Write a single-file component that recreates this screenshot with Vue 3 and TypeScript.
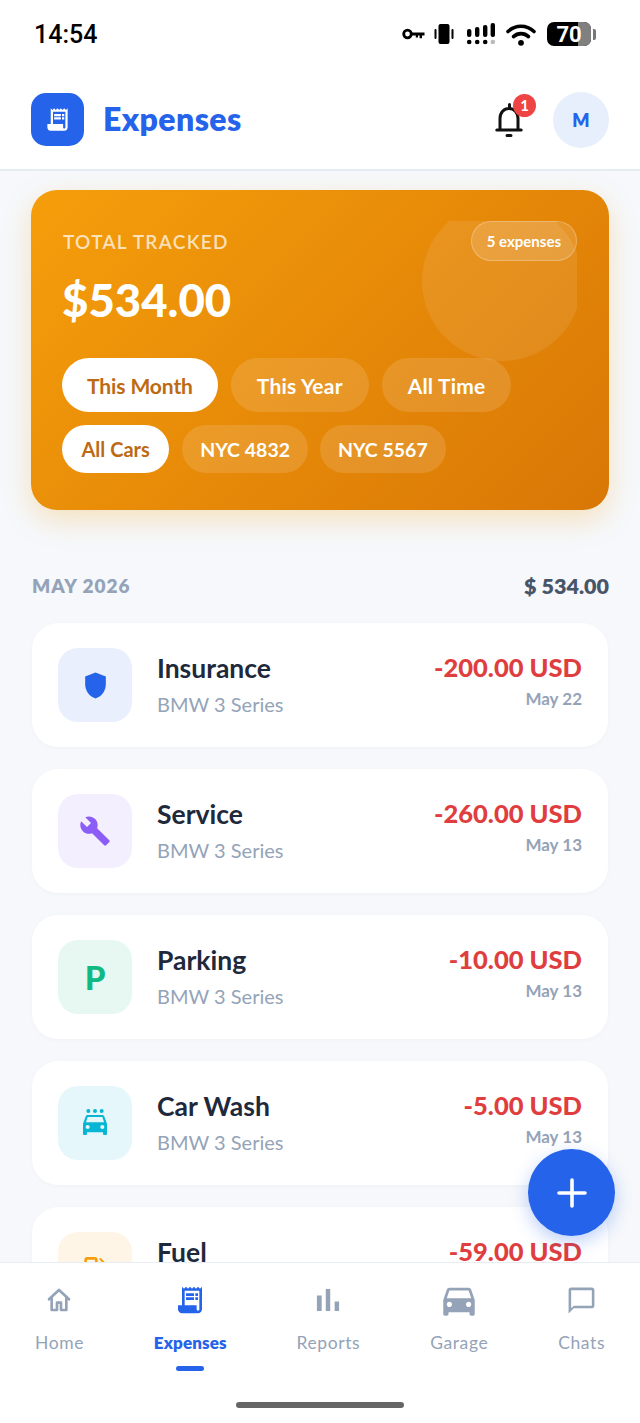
<script setup lang="ts">
interface Expense {
  name: string;
  car: string;
  amount: string;
  date: string;
  tint: string;
  color: string;
  path?: string;
  size?: number;
  letter?: string;
}

interface NavItem {
  label: string;
  path: string;
  size: number;
  active?: boolean;
  outline?: boolean;
}

const receiptPath =
  "M19.5 3.5 18 2l-1.5 1.5L15 2l-1.5 1.5L12 2l-1.5 1.5L9 2 7.5 3.5 6 2v14H3v3c0 1.66 1.34 3 3 3h12c1.66 0 3-1.34 3-3V2l-1.5 1.5zM19 19c0 .55-.45 1-1 1s-1-.45-1-1v-3H8V5h11v14zM9 7h6v2H9zM16 7h2v2h-2zM9 10h6v2H9zM16 10h2v2h-2z";
const carPath =
  "M18.92 6.01C18.72 5.42 18.16 5 17.5 5h-11c-.66 0-1.21.42-1.42 1.01L3 12v8c0 .55.45 1 1 1h1c.55 0 1-.45 1-1v-1h12v1c0 .55.45 1 1 1h1c.55 0 1-.45 1-1v-8l-2.08-5.99zM6.5 16c-.83 0-1.5-.67-1.5-1.5S5.67 13 6.5 13s1.5.67 1.5 1.5S7.33 16 6.5 16zm11 0c-.83 0-1.5-.67-1.5-1.5s.67-1.5 1.5-1.5 1.5.67 1.5 1.5-.67 1.5-1.5 1.5zM5 11l1.5-4.5h11L19 11H5z";

const periods = ["This Month", "This Year", "All Time"];
const cars = ["All Cars", "NYC 4832", "NYC 5567"];

const expenses: Expense[] = [
  {
    name: "Insurance",
    car: "BMW 3 Series",
    amount: "-200.00 USD",
    date: "May 22",
    tint: "#e9effd",
    color: "#2563eb",
    size: 31,
    path: "M12 2 4 5v6.09c0 5.05 3.41 9.76 8 10.91 4.59-1.15 8-5.86 8-10.91V5l-8-3z",
  },
  {
    name: "Service",
    car: "BMW 3 Series",
    amount: "-260.00 USD",
    date: "May 13",
    tint: "#f3effe",
    color: "#8b5cf6",
    size: 32,
    path: "M22.7 19l-9.1-9.1c.9-2.3.4-5-1.5-6.9-2-2-5-2.4-7.4-1.3L9 6 6 9 1.6 4.7C.4 7.1.9 10.1 2.9 12.1c1.9 1.9 4.6 2.4 6.9 1.5l9.1 9.1c.4.4 1 .4 1.4 0l2.3-2.3c.5-.4.5-1.1.1-1.4z",
  },
  {
    name: "Parking",
    car: "BMW 3 Series",
    amount: "-10.00 USD",
    date: "May 13",
    tint: "#e7f8f2",
    color: "#10b981",
    letter: "P",
  },
  {
    name: "Car Wash",
    car: "BMW 3 Series",
    amount: "-5.00 USD",
    date: "May 13",
    tint: "#e6f7fc",
    color: "#06b6d4",
    size: 32,
    path:
      "M7 1.5a1.5 1.5 0 1 0 0 3 1.5 1.5 0 1 0 0-3zM12 1.5a1.5 1.5 0 1 0 0 3 1.5 1.500 0 1 0 0-3zM17 1.500a1.5 1.5 0 1 0 0 3 1.5 1.5 0 1 0 0-3zM18.920 7.010C18.720 6.420 18.160 6 17.500 6h-11c-.66 0-1.210.42-1.420 1.010L3 12.500V20c0 .55.45 1 1 1h1c.55 0 1-.45 1-1v-1h12v1c0 .55.45 1 1 1h1c.55 0 1-.45 1-1v-7.500l-2.080-5.490zM6.500 16.500c-.83 0-1.500-.67-1.500-1.500s.67-1.500 1.500-1.500 1.500.67 1.500 1.500-.67 1.500-1.500 1.500zm11 0c-.83 0-1.500-.67-1.500-1.500s.67-1.500 1.500-1.500 1.500.67 1.500 1.500-.67 1.500-1.500 1.500zM5.200 11.500l1.300-4h11l1.300 4H5.200z",
  },
  {
    name: "Fuel",
    car: "BMW 3 Series",
    amount: "-59.00 USD",
    date: "May 13",
    tint: "#fef5e6",
    color: "#f59e0b",
    size: 32,
    path:
      "M19.77 7.23l.01-.01-3.72-3.72L15 4.56l2.11 2.11c-.94.36-1.61 1.26-1.61 2.33 0 1.38 1.12 2.5 2.5 2.5.36 0 .69-.08 1-.21v7.21c0 .55-.45 1-1 1s-1-.45-1-1V14c0-1.1-.9-2-2-2h-1V5c0-1.1-.9-2-2-2H6c-1.1 0-2 .9-2 2v16h10v-7.5h1.5v5c0 1.38 1.12 2.5 2.5 2.5s2.5-1.12 2.5-2.5V9c0-.69-.28-1.32-.73-1.77zM12 10H6V5h6v5zm6 0c-.55 0-1-.45-1-1s.45-1 1-1 1 .45 1 1-.45 1-1 1z",
  },
];

const navItems: NavItem[] = [
  {
    label: "Home",
    size: 32,
    outline: true,
    path: "M4.5 11.5 12 4.5l7.5 7M6.5 10v9.5h4v-5.5h3v5.5h4V10",
  },
  { label: "Expenses", size: 32, active: true, path: receiptPath },
  {
    label: "Reports",
    size: 38,
    path: "M5 9.2h3V19H5zM10.6 5h2.8v14h-2.8zm5.6 8H19v6h-2.8z",
  },
  { label: "Garage", size: 42, path: carPath },
  {
    label: "Chats",
    size: 31,
    path: "M20 2H4c-1.1 0-2 .9-2 2v18l4-4h14c1.1 0 2-.9 2-2V4c0-1.1-.9-2-2-2zm0 14H6l-2 2V4h16v12z",
  },
];
</script>

<template>
  <div class="screen">
    <div class="status-bar">
      <span class="clock">14:54</span>
      <div class="status-icons">
        <svg class="st-key" width="23" height="12" viewBox="0 0 23 12">
          <circle cx="5.5" cy="6" r="3.8" fill="none" stroke="#000" stroke-width="2.8" />
          <path d="M9 4.4h13.500v3h-2.500v2.800h-2.400V7.400h-1.600v2.200h-2.200V7.400H9z" fill="#000" />
        </svg>
        <svg class="st-vibrate" width="20" height="20" viewBox="0 0 20 20">
          <rect x="4.5" y="0" width="11" height="20" rx="2" fill="#000" />
          <rect x="0.5" y="5" width="2" height="10" rx="1" fill="#000" />
          <rect x="17.5" y="5" width="2" height="10" rx="1" fill="#000" />
        </svg>
        <svg class="st-signal" width="29" height="22" viewBox="0 0 29 22">
          <rect x="1" y="6" width="4.4" height="8" rx="2" fill="#000" />
          <rect x="9" y="4" width="4.4" height="10" rx="2" fill="#000" />
          <rect x="17" y="2" width="4.4" height="12" rx="2" fill="#000" />
          <rect x="24.6" y="0" width="4.4" height="14" rx="2" fill="#000" />
          <circle cx="3.2" cy="19" r="2.3" fill="#000" />
          <circle cx="11.2" cy="19" r="2.3" fill="#000" />
          <circle cx="19.2" cy="19" r="2.3" fill="#000" />
          <circle cx="26.8" cy="19" r="2.3" fill="#bbb" />
        </svg>
        <svg class="st-wifi" width="30" height="23" viewBox="0 0 30 23">
          <path d="M2 8.5c7.500-7 18.500-7 26 0" fill="none" stroke="#000" stroke-width="3.6" stroke-linecap="round" />
          <path d="M7.500 13.600c4.300-4 10.700-4 15 0" fill="none" stroke="#000" stroke-width="3.600" stroke-linecap="round" />
          <circle cx="15" cy="19.800" r="2.900" fill="#000" />
        </svg>
        <div class="battery">
          <span class="battery-fill" />
          <span class="battery-level">70</span>
        </div>
        <span class="battery-nub" />
      </div>
    </div>

    <header class="app-header">
      <div class="logo">
        <svg width="27" height="27" viewBox="0 0 24 24" fill="#fff"><path :d="receiptPath" /></svg>
      </div>
      <h1 class="app-title">Expenses</h1>
      <div class="bell">
        <svg width="28" height="36" viewBox="0 0 28 36" fill="none" stroke="#111" stroke-width="3" stroke-linecap="round">
          <path d="M14.500 2.500v4M5 27V16.500C5 10.500 9 6.500 14 6.500s9 4 9 10V27M1.800 28h24.400M12 33.500h4" />
        </svg>
        <span class="bell-badge">1</span>
      </div>
      <div class="avatar">M</div>
    </header>

    <main class="content">
      <section class="summary">
        <div class="summary-deco"><span /></div>
        <div class="summary-top">
          <span class="summary-label">TOTAL TRACKED</span>
          <span class="summary-count">5 expenses</span>
        </div>
        <div class="summary-total">$534.00</div>
        <div class="pill-row">
          <span
            v-for="(p, i) in periods"
            :key="p"
            class="pill pill-lg"
            :class="{ 'pill-on': i === 0 }"
          >{{ p }}</span>
        </div>
        <div class="pill-row pill-row-cars">
          <span
            v-for="(c, i) in cars"
            :key="c"
            class="pill pill-sm"
            :class="{ 'pill-on': i === 0 }"
          >{{ c }}</span>
        </div>
      </section>

      <div class="month-head">
        <span class="month-name">MAY 2026</span>
        <span class="month-sum">$ 534.00</span>
      </div>

      <div class="expense-list">
        <article v-for="e in expenses" :key="e.name" class="expense">
          <div class="expense-icon" :style="{ background: e.tint, color: e.color }">
            <span v-if="e.letter" class="expense-letter">{{ e.letter }}</span>
            <svg v-else :width="e.size" :height="e.size" viewBox="0 0 24 24" fill="currentColor">
              <path :d="e.path" />
            </svg>
          </div>
          <div class="expense-info">
            <div class="expense-name">{{ e.name }}</div>
            <div class="expense-car">{{ e.car }}</div>
          </div>
          <div class="expense-side">
            <div class="expense-amount">{{ e.amount }}</div>
            <div class="expense-date">{{ e.date }}</div>
          </div>
        </article>
      </div>
    </main>

    <button class="fab" aria-label="Add expense">
      <svg width="30" height="30" viewBox="0 0 30 30">
        <path d="M15 2v26M2 15h26" stroke="#fff" stroke-width="3.600" stroke-linecap="round" />
      </svg>
    </button>

    <nav class="tabbar">
      <div v-for="n in navItems" :key="n.label" class="tab" :class="{ 'tab-on': n.active }">
        <div class="tab-icon">
          <svg
            v-if="n.outline"
            :width="n.size"
            :height="n.size"
            viewBox="0 0 24 24"
            fill="none"
            stroke="currentColor"
            stroke-width="2"
            stroke-linejoin="round"
            stroke-linecap="round"
          >
            <path :d="n.path" />
          </svg>
          <svg v-else :width="n.size" :height="n.size" viewBox="0 0 24 24" fill="currentColor">
            <path :d="n.path" />
          </svg>
        </div>
        <span class="tab-label">{{ n.label }}</span>
        <span v-if="n.active" class="tab-marker" />
      </div>
    </nav>
    <div class="home-area"><span class="home-bar" /></div>
  </div>
</template>

<style>
html,
body {
  margin: 0;
  background: #fff;
}
</style>

<style scoped>
.screen {
  position: relative;
  display: flex;
  flex-direction: column;
  width: 640px;
  height: 1423px;
  overflow: hidden;
  background: #fff;
  font-family: Lato, "Noto Sans", sans-serif;
}

.status-bar {
  display: flex;
  align-items: center;
  justify-content: space-between;
  flex: none;
  height: 70px;
  padding: 0 44px 2px 34px;
  box-sizing: border-box;
}

.clock {
  font-family: Roboto, sans-serif;
  font-size: 25px;
  font-weight: 500;
  color: #000;
}

.status-icons {
  display: flex;
  align-items: center;
}

.st-key {
  margin-right: 9px;
}

.st-vibrate {
  margin-right: 12px;
}

.st-signal {
  margin-right: 11px;
}

.st-wifi {
  margin-right: 11px;
}

.battery {
  position: relative;
  width: 44px;
  height: 24px;
  overflow: hidden;
  border-radius: 7px;
  background: #000;
}

.battery-fill {
  position: absolute;
  top: 0;
  right: 0;
  bottom: 0;
  width: 13px;
  background: #808080;
}

.battery-level {
  position: absolute;
  inset: 0;
  text-align: center;
  font-family: Roboto, sans-serif;
  font-size: 22px;
  line-height: 25px;
  font-weight: 700;
  color: #fff;
}

.battery-nub {
  width: 3px;
  height: 11px;
  margin-left: 2px;
  border-radius: 0 2px 2px 0;
  background: #777;
}

.app-header {
  display: flex;
  align-items: center;
  flex: none;
  height: 101px;
  padding: 0 31px;
  box-sizing: border-box;
  border-bottom: 2px solid #e4ebf3;
}

.logo {
  display: flex;
  align-items: center;
  justify-content: center;
  width: 53px;
  height: 53px;
  border-radius: 15px;
  background: #2563eb;
}

.app-title {
  margin: 0 0 2px 19px;
  font-size: 32px;
  font-weight: 800;
  letter-spacing: 0.4px;
  color: #2563eb;
}

.bell {
  position: relative;
  display: flex;
  margin-left: auto;
  margin-right: 30px;
}

.bell-badge {
  position: absolute;
  top: -8px;
  right: -13px;
  width: 23px;
  height: 23px;
  border-radius: 50%;
  background: #ef4444;
  color: #fff;
  font-size: 15px;
  font-weight: 700;
  line-height: 23px;
  text-align: center;
}

.avatar {
  display: flex;
  align-items: center;
  justify-content: center;
  width: 56px;
  height: 56px;
  border-radius: 50%;
  background: #e8effc;
  color: #2563eb;
  font-size: 18px;
  font-weight: 800;
}

.content {
  flex: 1;
  min-height: 0;
  overflow: hidden;
  padding: 19px 31px 0 31px;
  background: #f6f8fb;
}

.summary {
  position: relative;
  height: 320px;
  padding: 31px 32px 0 31px;
  box-sizing: border-box;
  border-radius: 26px;
  background: linear-gradient(135deg, #f59e0b, #d97706);
  box-shadow: 0 10px 28px rgba(245, 158, 11, 0.25);
}

.summary-deco {
  position: absolute;
  top: 31px;
  right: 32px;
  width: 155px;
  height: 140px;
  overflow: hidden;
}

.summary-deco span {
  display: block;
  width: 160px;
  height: 160px;
  margin-top: -20px;
  border-radius: 50%;
  background: rgba(255, 255, 255, 0.09);
}

.summary-top {
  position: relative;
  display: flex;
  align-items: center;
  justify-content: space-between;
}

.summary-label {
  margin-left: 1px;
  font-size: 19px;
  font-weight: 600;
  letter-spacing: 1.3px;
  color: rgba(255, 255, 255, 0.72);
}

.summary-count {
  height: 40px;
  padding: 0 15px;
  box-sizing: border-box;
  border: 1px solid rgba(255, 255, 255, 0.25);
  border-radius: 20px;
  background: rgba(255, 255, 255, 0.14);
  color: #fff;
  font-size: 15px;
  font-weight: 700;
  line-height: 38px;
}

.summary-total {
  position: relative;
  margin-top: 7px;
  font-size: 45.5px;
  line-height: 64px;
  font-weight: 900;
  color: #fff;
}

.pill-row {
  position: relative;
  display: flex;
  gap: 13px;
}

.pill-row + .pill-row {
  margin-top: 13px;
}

.summary-total + .pill-row {
  margin-top: 26px;
}

.pill-row-cars {
  gap: 12px;
}

.pill {
  display: flex;
  align-items: center;
  border-radius: 27px;
  background: rgba(255, 255, 255, 0.13);
  color: #fff;
  font-weight: 700;
  white-space: nowrap;
}

.pill-lg {
  height: 54px;
  padding: 0 26px;
  font-size: 21px;
  letter-spacing: 0.2px;
}

.pill-sm {
  height: 48px;
  padding: 0 18px;
  font-size: 19.5px;
}

.pill-on {
  background: #fff;
  color: #bd6a12;
}

.pill-lg.pill-on {
  padding: 0 25px;
  letter-spacing: -0.1px;
}

.pill-sm.pill-on {
  padding: 0 19.5px;
  margin-right: 1px;
  font-size: 20px;
}

.month-head {
  display: flex;
  align-items: center;
  justify-content: space-between;
  margin: 62px 0 23px 1px;
  line-height: 28px;
}

.month-name {
  font-size: 19px;
  font-weight: 800;
  letter-spacing: 1px;
  color: #94a3b8;
}

.month-sum {
  font-size: 21.5px;
  font-weight: 800;
  color: #475569;
}

.expense-list {
  display: flex;
  flex-direction: column;
  gap: 22px;
  margin: 0 1px;
}

.expense {
  display: flex;
  align-items: center;
  flex: none;
  height: 124px;
  padding: 0 26px 0 26px;
  box-sizing: border-box;
  border-radius: 26px;
  background: #fff;
  box-shadow: 0 1px 4px rgba(15, 23, 42, 0.03);
}

.expense-icon {
  display: flex;
  align-items: center;
  justify-content: center;
  flex: none;
  width: 74px;
  height: 74px;
  border-radius: 20px;
}

.expense-letter {
  font-size: 33px;
  font-weight: 900;
}

.expense-info {
  flex: 1;
  margin-left: 25px;
}

.expense-name {
  font-size: 26.5px;
  line-height: 32px;
  font-weight: 700;
  color: #1e293b;
}

.expense-car {
  margin-top: 6px;
  font-size: 20px;
  line-height: 28px;
  color: #94a3b8;
}

.expense-side {
  align-self: flex-start;
  margin-top: 28px;
  text-align: right;
}

.expense-amount {
  font-size: 25.5px;
  line-height: 32px;
  font-weight: 900;
  color: #e03e3e;
}

.expense-date {
  font-size: 17px;
  line-height: 32px;
  font-weight: 700;
  color: #94a3b8;
}

.fab {
  position: absolute;
  left: 528px;
  top: 1149px;
  display: flex;
  align-items: center;
  justify-content: center;
  width: 87px;
  height: 87px;
  padding: 0;
  border: 0;
  border-radius: 50%;
  background: #2563eb;
  box-shadow: 0 6px 18px rgba(37, 99, 235, 0.3);
}

.tabbar {
  display: flex;
  justify-content: space-around;
  flex: none;
  height: 110px;
  padding-top: 18px;
  box-sizing: border-box;
  border-top: 1px solid #e8edf3;
  background: #fff;
}

.tab {
  display: flex;
  flex-direction: column;
  align-items: center;
  color: #94a3b8;
}

.tab-on {
  color: #2563eb;
}

.tab-icon {
  display: flex;
  align-items: center;
  justify-content: center;
  height: 38px;
}

.tab-label {
  margin-top: 12px;
  font-size: 17.5px;
  line-height: 24px;
  letter-spacing: 0.6px;
}

.tab-on .tab-label {
  font-size: 17px;
  font-weight: 800;
  letter-spacing: 0.1px;
}

.tab-marker {
  width: 28px;
  height: 5px;
  margin-top: 11px;
  border-radius: 3px;
  background: #2563eb;
}

.home-area {
  display: flex;
  justify-content: center;
  flex: none;
  height: 51px;
  background: #fff;
}

.home-bar {
  width: 168px;
  height: 6px;
  margin-top: 30px;
  border-radius: 3px;
  background: #666;
}
</style>
